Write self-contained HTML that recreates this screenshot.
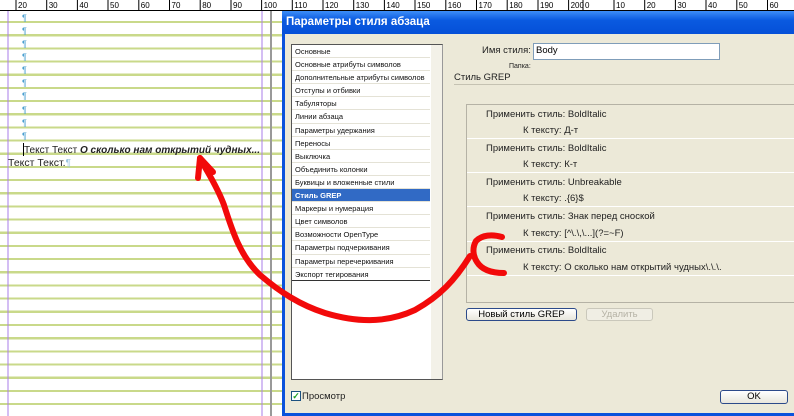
<!DOCTYPE html>
<html><head><meta charset="utf-8"><style>
*{margin:0;padding:0;box-sizing:border-box}
body{width:794px;height:416px;overflow:hidden;position:relative;background:#fff;font-family:"Liberation Sans",Tahoma,sans-serif}
.doc{position:absolute;left:0;top:10px;width:282px;height:406px;background:repeating-linear-gradient(to bottom,#fff 0,#fff 11px,#c9d98a 11px,#c9d98a 13.17px);background-position:0 0}
.abs{position:absolute}
.dlg{position:absolute;left:282px;top:11px;width:520px;height:405px;background:#ece9d8;border:3px solid #0a52dc;border-top:none}
.title{position:absolute;left:282px;top:11px;width:520px;height:23px;background:linear-gradient(#3d8ef7,#0a5ae0 40%,#0550d8);color:#fff;font-weight:bold;font-size:11.5px;padding:5px 0 0 4px}
.list{position:absolute;left:291px;top:44px;width:152px;height:336px;background:#fff;border:1px solid #555;border-right:1px solid #999}
.list div{height:13.1px;line-height:13px;font-size:7.5px;padding-left:3px;border-bottom:1px solid #e4e2d6;width:138px;color:#111;white-space:nowrap}
.list div.sel{background:#316ac5;color:#fff;font-weight:bold}
.list div.last{border-bottom:1px solid #333}
.sb{position:absolute;left:431px;top:45px;width:11px;height:334px;background:#f3f1e8}
.lbl{position:absolute;font-size:9.5px;color:#222;white-space:nowrap}
.grep{position:absolute;left:466px;top:104px;width:330px;height:199px;border:1px solid #b5b2a5;border-right:none}
.row{position:absolute;left:0;width:330px;height:34px;border-bottom:1px solid #fff}
.btn{position:absolute;font-size:9.5px;text-align:center;border:1px solid #2c4a8a;border-radius:3px;background:linear-gradient(#fff,#e8e6dc);line-height:11px}
</style></head><body>
<div class="doc"></div>
<svg class="abs" style="left:0;top:0" width="794" height="11">
<rect width="794" height="11" fill="#fff"/>
<line x1="0" y1="10.5" x2="794" y2="10.5" stroke="#000"/>
<g stroke="#000" stroke-width="1">
<path d="M16 0V10M46.7 0V10M77.4 0V10M108 0V10M138.8 0V10M169.5 0V10M200.2 0V10M231 0V10M261.6 0V10M292.3 0V10M323 0V10M353.7 0V10M384.4 0V10M415 0V10M445.8 0V10M476.5 0V10M507.2 0V10M538 0V10M568.6 0V10M583 0V10M614 0V10M644.7 0V10M675.4 0V10M706 0V10M736.8 0V10M767.5 0V10"/>
</g>
<g font-size="8" fill="#000" font-family="Liberation Sans">
<text x="18" y="8">20</text><text x="48.7" y="8">30</text><text x="79.4" y="8">40</text><text x="110" y="8">50</text><text x="140.8" y="8">60</text><text x="171.5" y="8">70</text><text x="202.2" y="8">80</text><text x="233" y="8">90</text><text x="263.6" y="8">100</text><text x="294.3" y="8">110</text><text x="325" y="8">120</text><text x="355.7" y="8">130</text><text x="386.4" y="8">140</text><text x="417" y="8">150</text><text x="447.8" y="8">160</text><text x="478.5" y="8">170</text><text x="509.2" y="8">180</text><text x="540" y="8">190</text><text x="570.6" y="8">200</text><text x="585" y="8">0</text><text x="616" y="8">10</text><text x="646.7" y="8">20</text><text x="677.4" y="8">30</text><text x="708" y="8">40</text><text x="738.8" y="8">50</text><text x="769.5" y="8">60</text>
</g>
</svg>
<svg class="abs" style="left:0;top:0" width="794" height="416" >
<path d="M8 11V416M262 11V416" stroke="#a97ee8" stroke-width="1"/>
<path d="M271 11V416" stroke="#999" stroke-width="2"/>
<g fill="#4a9fd0" font-size="9" font-family="Liberation Sans">
<text x="22" y="21">¶</text><text x="22" y="34">¶</text><text x="22" y="47">¶</text><text x="22" y="60">¶</text><text x="22" y="73">¶</text><text x="22" y="86">¶</text><text x="22" y="99">¶</text><text x="22" y="113">¶</text><text x="22" y="126">¶</text><text x="22" y="139">¶</text>
</g>
<path d="M23.5 143V156" stroke="#000"/>
<text x="24" y="153" font-size="10.5" fill="#222" font-family="Liberation Sans" textLength="236" lengthAdjust="spacingAndGlyphs">Текст Текст <tspan font-weight="bold" font-style="italic">О сколько нам открытий чудных...</tspan></text>
<text x="8" y="166" font-size="10.5" fill="#222" font-family="Liberation Sans">Текст Текст.<tspan fill="#9cc6e0">¶</tspan></text>
</svg>
<div class="dlg"></div>
<div class="title">Параметры стиля абзаца</div>
<div class="list">
<div>Основные</div><div>Основные атрибуты символов</div><div>Дополнительные атрибуты символов</div><div>Отступы и отбивки</div><div>Табуляторы</div><div>Линии абзаца</div><div>Параметры удержания</div><div>Переносы</div><div>Выключка</div><div>Объединить колонки</div><div>Буквицы и вложенные стили</div><div class="sel">Стиль GREP</div><div>Маркеры и нумерация</div><div>Цвет символов</div><div>Возможности OpenType</div><div>Параметры подчеркивания</div><div>Параметры перечеркивания</div><div class="last">Экспорт тегирования</div>
</div>
<div class="sb"></div>
<div class="lbl" style="left:482px;top:45px">Имя стиля:</div>
<div class="abs" style="left:533px;top:43px;width:187px;height:17px;background:#fff;border:1px solid #7f9db9;font-size:9.5px;padding:1px 2px">Body</div>
<div class="lbl" style="left:509px;top:63px;font-size:7px">Папка:</div>
<div class="lbl" style="left:454px;top:72px">Стиль GREP</div>
<div class="abs" style="left:454px;top:84px;width:340px;height:1px;background:#c5c2b2"></div>
<div class="grep">
<div class="row" style="top:0"></div><div class="row" style="top:34px"></div><div class="row" style="top:68px"></div><div class="row" style="top:103px"></div><div class="row" style="top:137px"></div>
</div>
<div class="lbl" style="left:486px;top:109px">Применить стиль: BoldItalic</div>
<div class="lbl" style="left:523px;top:125px">К тексту: Д-т</div>
<div class="lbl" style="left:486px;top:143px">Применить стиль: BoldItalic</div>
<div class="lbl" style="left:523px;top:159px">К тексту: К-т</div>
<div class="lbl" style="left:486px;top:177px">Применить стиль: Unbreakable</div>
<div class="lbl" style="left:523px;top:193px">К тексту: .{6}$</div>
<div class="lbl" style="left:486px;top:211px">Применить стиль: Знак перед сноской</div>
<div class="lbl" style="left:523px;top:228px">К тексту: [^\.\,\...](?=~F)</div>
<div class="lbl" style="left:486px;top:245px">Применить стиль: BoldItalic</div>
<div class="lbl" style="left:523px;top:262px">К тексту: О сколько нам открытий чудных\.\.\.</div>
<div class="btn" style="left:466px;top:308px;width:111px;height:13px">Новый стиль GREP</div>
<div class="btn" style="left:586px;top:308px;width:67px;height:13px;border-color:#cac8bb;color:#b5b2a5;background:#f0eee4">Удалить</div>
<div class="btn" style="left:720px;top:390px;width:68px;height:14px">OK</div>
<div class="abs" style="left:291px;top:391px;width:10px;height:10px;border:1px solid #1c5180;background:#fff;color:#21a121;font-size:9px;line-height:8px;text-align:center;font-weight:bold">✓</div>
<div class="lbl" style="left:302px;top:391px">Просмотр</div>
<svg class="abs" style="left:0;top:0" width="794" height="416">
<g fill="none" stroke="#f20a0a" stroke-width="6" stroke-linecap="round" stroke-linejoin="round">
<path d="M200 158C207 172 216 184 224 205C232 230 240 256 260 275C280 292 300 305 325 313C355 322 385 324 415 310C440 296 455 280 470 256"/>
<path d="M198 178L200 158L213 172"/>
<path d="M502 237C492 234 482 235 476 241C472 248 473 256 477 262C482 270 492 273 504 273"/>
</g>
</svg>
</body></html>
